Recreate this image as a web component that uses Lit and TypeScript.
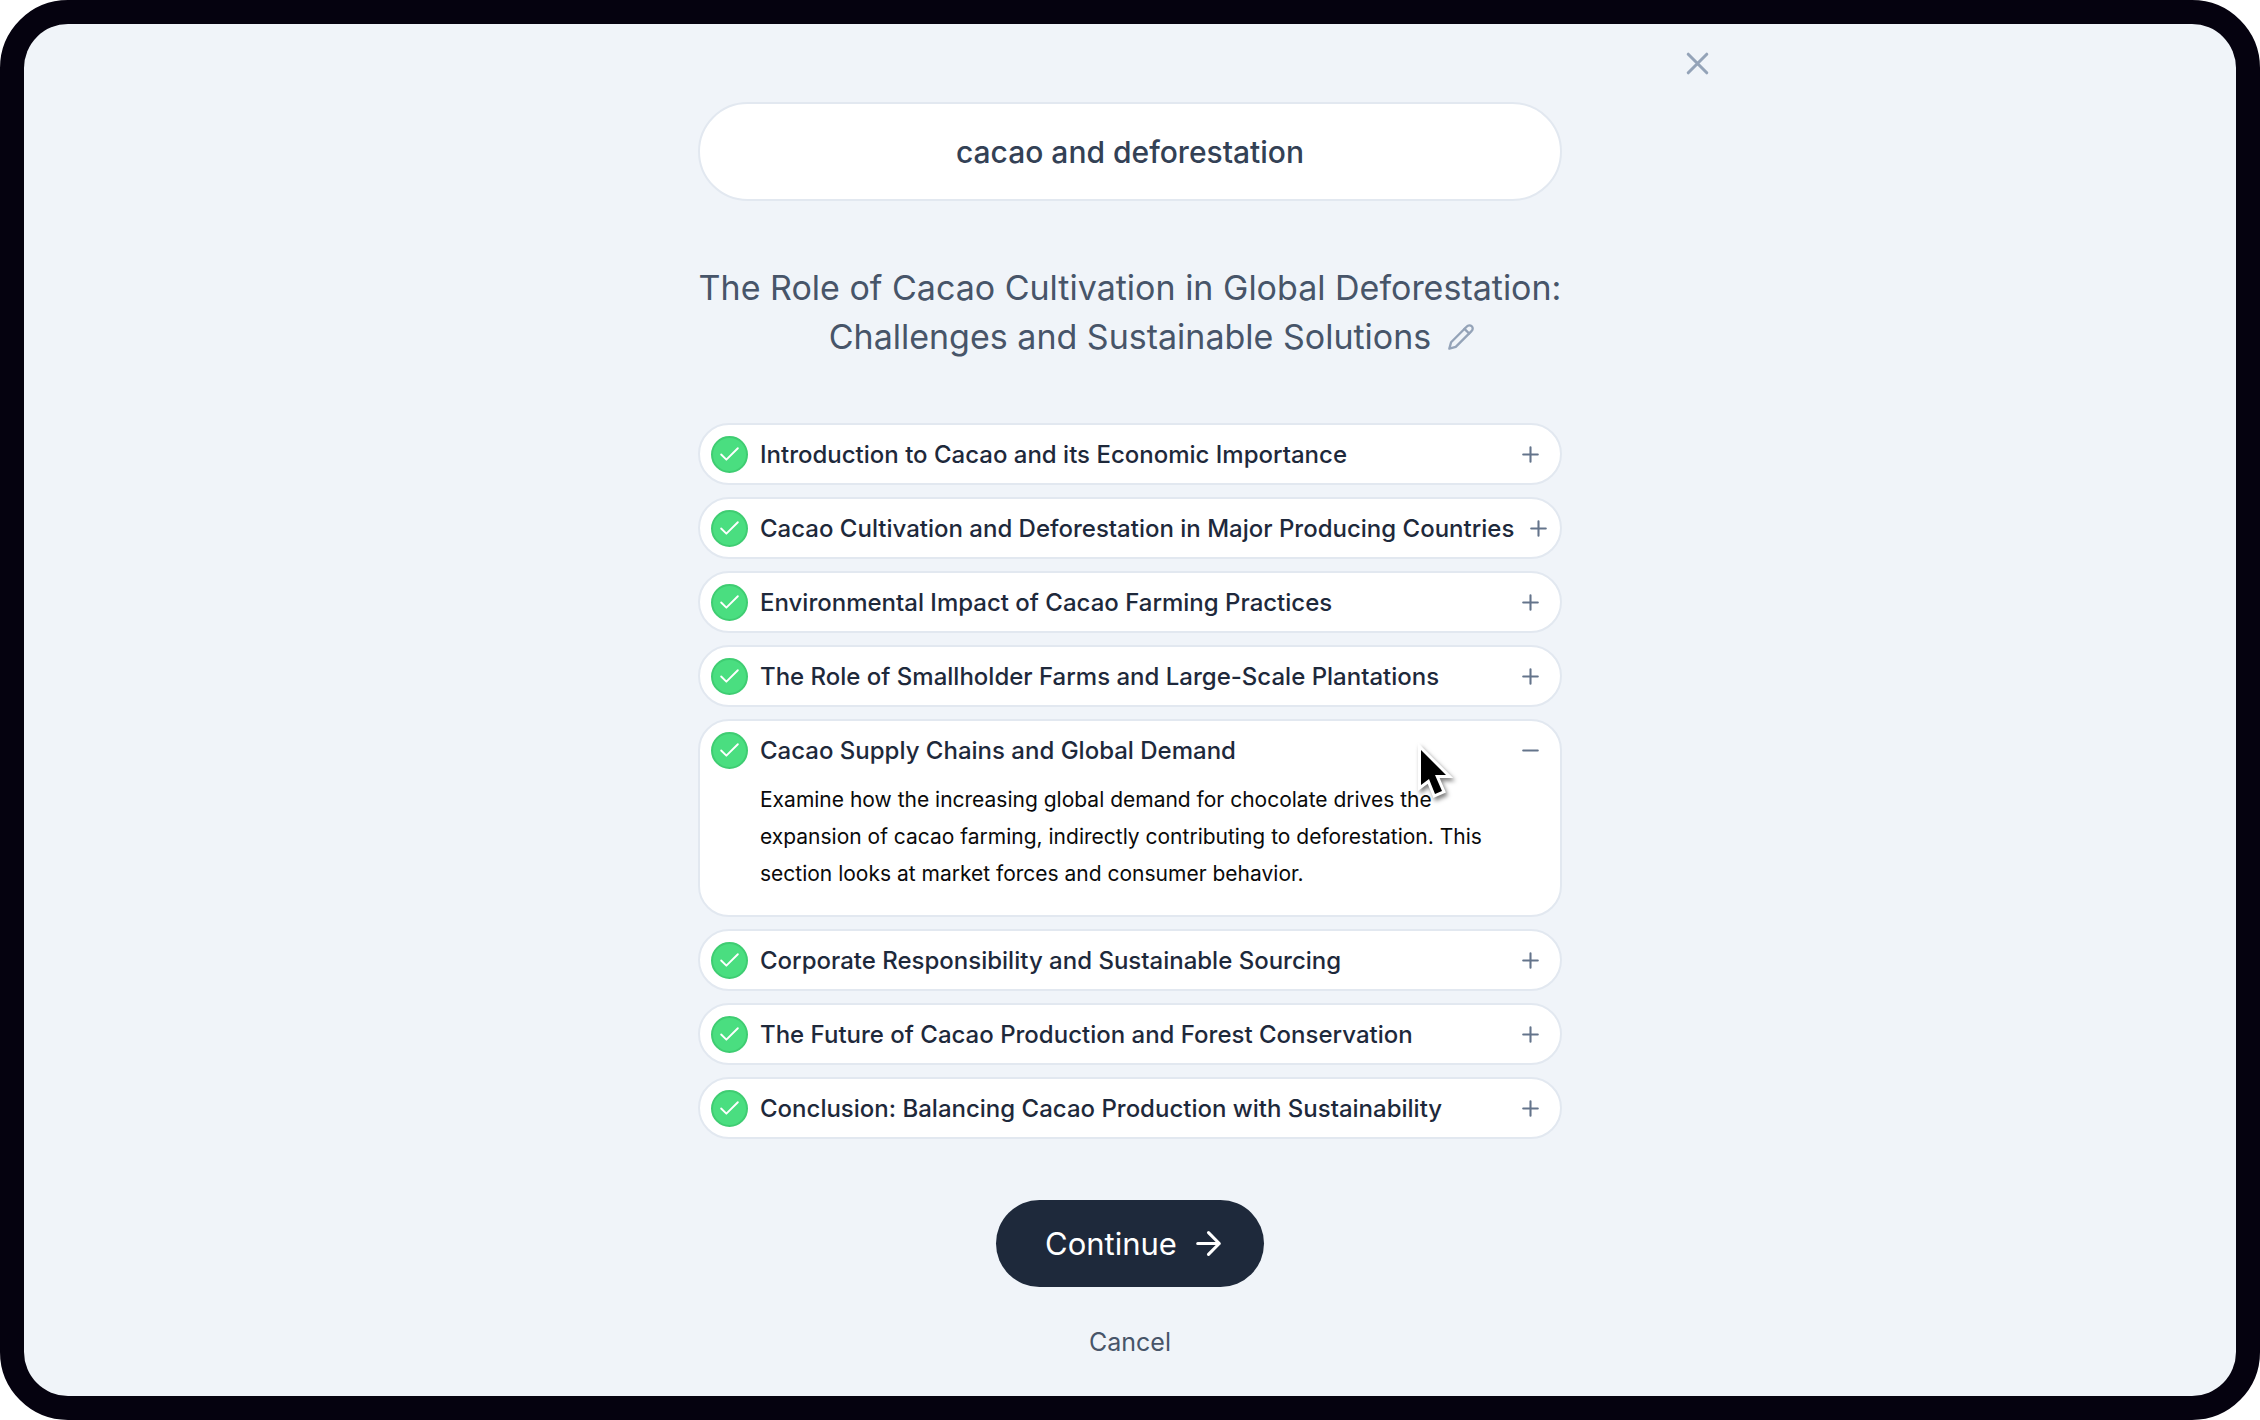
import { LitElement, html, css, nothing } from "lit";
import { customElement, state } from "lit/decorators.js";

interface Section {
  title: string;
  summary: string;
}

const SECTIONS: Section[] = [
  { title: "Introduction to Cacao and its Economic Importance", summary: "" },
  { title: "Cacao Cultivation and Deforestation in Major Producing Countries", summary: "" },
  { title: "Environmental Impact of Cacao Farming Practices", summary: "" },
  { title: "The Role of Smallholder Farms and Large-Scale Plantations", summary: "" },
  {
    title: "Cacao Supply Chains and Global Demand",
    summary:
      "Examine how the increasing global demand for chocolate drives the expansion of cacao farming, indirectly contributing to deforestation. This section looks at market forces and consumer behavior.",
  },
  { title: "Corporate Responsibility and Sustainable Sourcing", summary: "" },
  { title: "The Future of Cacao Production and Forest Conservation", summary: "" },
  { title: "Conclusion: Balancing Cacao Production with Sustainability", summary: "" },
];

@customElement("app-root")
export class AppRoot extends LitElement {
  @state() private open = 4;
  @state() private included = SECTIONS.map(() => true);

  static styles = css`
    :host {
      display: block;
      background: #ffffff;
      font-family: Inter, "Liberation Sans", sans-serif;
    }
    * {
      box-sizing: border-box;
    }
    button {
      margin: 0;
      padding: 0;
      border: 0;
      background: none;
      font: inherit;
      color: inherit;
      cursor: pointer;
    }
    svg {
      display: block;
      flex: none;
      fill: none;
      stroke: currentColor;
      stroke-width: 2;
      stroke-linecap: round;
      stroke-linejoin: round;
    }
    .frame {
      min-height: 100vh;
      border: 24px solid #05020f;
      border-radius: 68px;
      background: #05020f;
      display: flex;
    }
    .screen {
      flex: 1;
      border-radius: 44px;
      background: #f0f4f9;
      display: flex;
      flex-direction: column;
      align-items: center;
      padding: 21px 40px 0;
    }
    .top {
      width: 100%;
      max-width: 1172px;
      display: flex;
      justify-content: flex-end;
    }
    .close {
      color: #94a3b8;
    }
    .icon-lg {
      width: 37px;
      height: 37px;
    }
    .icon-md {
      width: 28px;
      height: 28px;
    }
    .icon-sm {
      width: 25px;
      height: 25px;
    }
    .column {
      width: 100%;
      max-width: 864px;
      display: flex;
      flex-direction: column;
      align-items: center;
    }
    .topic {
      width: 100%;
      height: 99px;
      margin-top: 20px;
      border: 2px solid #e2e8f0;
      border-radius: 50px;
      background: #ffffff;
      color: #334155;
      font-family: inherit;
      font-size: 30px;
      font-weight: 500;
      text-align: center;
      outline: none;
    }
    .heading {
      margin: 62px 0 0;
      color: #475569;
      font-size: 34px;
      font-weight: 400;
      line-height: 49px;
      text-align: center;
      white-space: nowrap;
    }
    .line {
      display: flex;
      justify-content: center;
      align-items: center;
      gap: 16px;
    }
    /* Balances the edit button so the words stay centred. */
    .line-editable {
      padding-left: 44px;
    }
    .edit {
      color: #94a3b8;
    }
    .sections {
      list-style: none;
      width: 100%;
      margin: 62px 0 0;
      padding: 0;
      display: flex;
      flex-direction: column;
      gap: 12px;
    }
    .section {
      border: 2px solid #e2e8f0;
      border-radius: 31px;
      background: #ffffff;
      padding: 0 17px 0 11px;
    }
    .head {
      height: 58px;
      display: flex;
      align-items: center;
    }
    .tick {
      flex: none;
      display: grid;
      place-items: center;
      color: #ffffff;
    }
    .tick input {
      appearance: none;
      grid-area: 1 / 1;
      width: 37px;
      height: 37px;
      margin: 0;
      border: 2px solid #cbd5e1;
      border-radius: 50%;
    }
    .tick input:checked {
      background: #4ade80;
      border-color: #3fcd72;
    }
    .tick svg {
      grid-area: 1 / 1;
      pointer-events: none;
    }
    .title {
      flex: 1 0 auto;
      margin-left: 12px;
      padding-right: 12px;
      color: #1e293b;
      font-size: 24px;
      font-weight: 500;
      line-height: 37px;
      white-space: nowrap;
    }
    .toggle {
      flex: none;
      color: #64748b;
    }
    .summary {
      margin: 0;
      padding: 2px 30px 23px 49px;
      color: #0a0a0a;
      font-size: 21px;
      line-height: 37px;
    }
    .continue {
      margin-top: 61px;
      height: 87px;
      padding: 0 37px 0 49px;
      border-radius: 44px;
      background: #1e293b;
      color: #ffffff;
      font-size: 31px;
      font-weight: 400;
      display: flex;
      align-items: center;
      gap: 13px;
    }
    .cancel {
      margin-top: 37px;
      color: #475569;
      font-size: 25px;
      line-height: 37px;
    }
    .pointer {
      position: absolute;
      left: 1416px;
      top: 742px;
      width: 42px;
      height: 62px;
      overflow: visible;
      stroke-linejoin: miter;
      filter: drop-shadow(2px 3px 2px rgba(0, 0, 0, 0.5));
      pointer-events: none;
    }
  `;

  private toggle(i: number) {
    this.open = this.open === i ? -1 : i;
  }

  private include(i: number, e: Event) {
    const checked = (e.target as HTMLInputElement).checked;
    this.included = this.included.map((v, n) => (n === i ? checked : v));
  }

  private renderSection(s: Section, i: number) {
    const open = this.open === i;
    return html`
      <li class="section">
        <div class="head">
          <span class="tick">
            <input
              type="checkbox"
              id="section-${i}"
              .checked=${this.included[i]}
              @change=${(e: Event) => this.include(i, e)}
            />
            <svg class="icon-sm" viewBox="0 0 24 24" aria-hidden="true">
              <path stroke-width="1.8" d="M20 6 9 17l-5-5" />
            </svg>
          </span>
          <label class="title" for="section-${i}">${s.title}</label>
          <button
            class="toggle"
            aria-expanded=${open}
            aria-label=${open ? "Collapse" : "Expand"}
            @click=${() => this.toggle(i)}
          >
            <svg class="icon-sm" viewBox="0 0 24 24" aria-hidden="true">
              <path d=${open ? "M5 12h14" : "M5 12h14M12 5v14"} />
            </svg>
          </button>
        </div>
        ${open && s.summary ? html`<p class="summary">${s.summary}</p>` : nothing}
      </li>
    `;
  }

  render() {
    return html`
      <div class="frame">
        <main class="screen">
          <div class="top">
            <button class="close" aria-label="Close">
              <svg class="icon-lg" viewBox="0 0 24 24" aria-hidden="true">
                <path d="M18 6 6 18M6 6l12 12" />
              </svg>
            </button>
          </div>
          <div class="column">
            <input class="topic" type="text" aria-label="Topic" value="cacao and deforestation" />
            <h1 class="heading">
              <span class="line">The Role of Cacao Cultivation in Global Deforestation:</span>
              <span class="line line-editable"
                >Challenges and Sustainable Solutions
                <button class="edit" aria-label="Edit title">
                  <svg class="icon-md" viewBox="0 0 24 24" aria-hidden="true">
                    <path d="M17 3a2.85 2.83 0 1 1 4 4L7.5 20.5 2 22l1.5-5.5Z" />
                    <path d="m15 5 4 4" />
                  </svg></button
              ></span>
            </h1>
            <ul class="sections">
              ${SECTIONS.map((s, i) => this.renderSection(s, i))}
            </ul>
            <button class="continue">
              Continue
              <svg class="icon-lg" viewBox="0 0 24 24" aria-hidden="true">
                <path d="M5 12h14M12 5l7 7-7 7" />
              </svg>
            </button>
            <button class="cancel">Cancel</button>
          </div>
        </main>
        <svg class="pointer" viewBox="0 0 42 62" aria-hidden="true">
          <path
            fill="#000"
            stroke="#fff"
            stroke-width="6"
            paint-order="stroke"
            d="M5 8 30 33H19l7 16-7 3-6-15-8 6Z"
          />
        </svg>
      </div>
    `;
  }
}
